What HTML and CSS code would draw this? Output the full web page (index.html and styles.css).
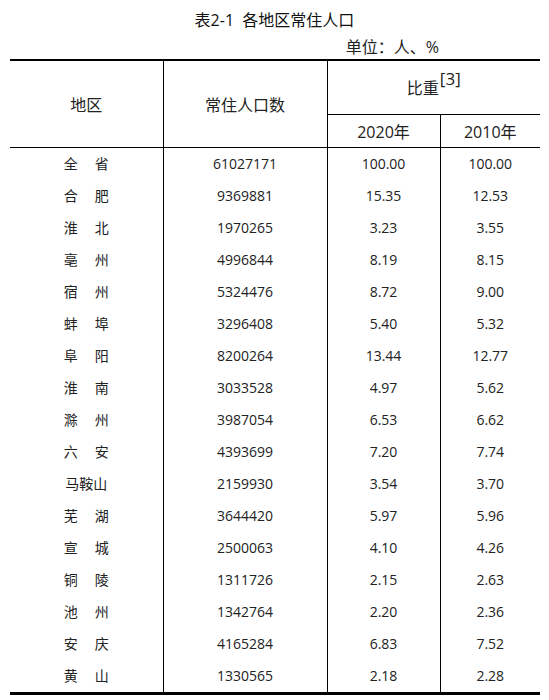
FILE: index.html
```html
<!DOCTYPE html>
<html lang="zh-CN">
<head>
<meta charset="utf-8">
<title>表2-1 各地区常住人口</title>
<link rel="stylesheet" href="styles.css">
</head>
<body>
<div class="page">
  <h1 class="title">表2-1&nbsp;&nbsp;各地区常住人口</h1>
  <div class="unit">单位：人、%</div>
  <table class="data">
    <colgroup>
      <col class="c1"><col class="c2"><col class="c3"><col class="c4">
    </colgroup>
    <thead>
      <tr class="h1">
        <th rowspan="2">地区</th>
        <th rowspan="2">常住人口数</th>
        <th colspan="2" class="share">比重<sup>[3]</sup></th>
      </tr>
      <tr class="h2">
        <th>2020年</th>
        <th>2010年</th>
      </tr>
    </thead>
    <tbody>
      <tr><td><span class="nm"><span>全</span><span>省</span></span></td><td>61027171</td><td>100.00</td><td>100.00</td></tr>
      <tr><td><span class="nm"><span>合</span><span>肥</span></span></td><td>9369881</td><td>15.35</td><td>12.53</td></tr>
      <tr><td><span class="nm"><span>淮</span><span>北</span></span></td><td>1970265</td><td>3.23</td><td>3.55</td></tr>
      <tr><td><span class="nm"><span>亳</span><span>州</span></span></td><td>4996844</td><td>8.19</td><td>8.15</td></tr>
      <tr><td><span class="nm"><span>宿</span><span>州</span></span></td><td>5324476</td><td>8.72</td><td>9.00</td></tr>
      <tr><td><span class="nm"><span>蚌</span><span>埠</span></span></td><td>3296408</td><td>5.40</td><td>5.32</td></tr>
      <tr><td><span class="nm"><span>阜</span><span>阳</span></span></td><td>8200264</td><td>13.44</td><td>12.77</td></tr>
      <tr><td><span class="nm"><span>淮</span><span>南</span></span></td><td>3033528</td><td>4.97</td><td>5.62</td></tr>
      <tr><td><span class="nm"><span>滁</span><span>州</span></span></td><td>3987054</td><td>6.53</td><td>6.62</td></tr>
      <tr><td><span class="nm"><span>六</span><span>安</span></span></td><td>4393699</td><td>7.20</td><td>7.74</td></tr>
      <tr><td><span class="nm three">马鞍山</span></td><td>2159930</td><td>3.54</td><td>3.70</td></tr>
      <tr><td><span class="nm"><span>芜</span><span>湖</span></span></td><td>3644420</td><td>5.97</td><td>5.96</td></tr>
      <tr><td><span class="nm"><span>宣</span><span>城</span></span></td><td>2500063</td><td>4.10</td><td>4.26</td></tr>
      <tr><td><span class="nm"><span>铜</span><span>陵</span></span></td><td>1311726</td><td>2.15</td><td>2.63</td></tr>
      <tr><td><span class="nm"><span>池</span><span>州</span></span></td><td>1342764</td><td>2.20</td><td>2.36</td></tr>
      <tr><td><span class="nm"><span>安</span><span>庆</span></span></td><td>4165284</td><td>6.83</td><td>7.52</td></tr>
      <tr><td><span class="nm"><span>黄</span><span>山</span></span></td><td>1330565</td><td>2.18</td><td>2.28</td></tr>
    </tbody>
  </table>
</div>
</body>
</html>
```

FILE: styles.css
```css
html, body {
  margin: 0;
  padding: 0;
  background: #ffffff;
}

body {
  font-family: "Open Sans", "Noto Sans CJK SC", sans-serif;
  color: #222222;
}

.page {
  width: 549px;
  padding-top: 10px;
}

.title {
  margin: 0;
  font-size: 16px;
  font-weight: 400;
  line-height: 20px;
  text-align: center;
  color: #111;
}

.unit {
  margin-top: 7px;
  font-size: 16px;
  line-height: 20px;
  text-align: right;
  padding-right: 110px;
}

.data {
  margin: 2px 0 0 10px;
  width: 530px;
  border-collapse: collapse;
  table-layout: fixed;
  border-top: 2px solid #000;
  border-bottom: 3px solid #000;
}

.c1 { width: 153px; }
.c2 { width: 164px; }
.c3 { width: 113px; }
.c4 { width: 100px; }

.data th,
.data td {
  padding: 0;
  text-align: center;
  border-left: 1px solid #000;
  border-right: 1px solid #000;
}

.data tr > :first-child { border-left: none; }
.data tr > :last-child { border-right: none; }

.data th {
  font-size: 16px;
  font-weight: 400;
}

.h1 th { height: 51px; }
.h1 .share {
  border-bottom: 1px solid #000;
  padding-bottom: 2px;
}

.h2 th { height: 32px; }

.data thead tr:last-child th,
.data thead th[rowspan] {
  border-bottom: 1px solid #000;
}

.share sup {
  font-size: 17px;
  line-height: 0;
  vertical-align: 9px;
  margin-left: 1px;
}

.data td {
  height: 32px;
  font-size: 14px;
  line-height: 20px;
}

.nm {
  display: inline-flex;
  gap: 17px;
  justify-content: center;
}

.nm.three { gap: 0; }
```
